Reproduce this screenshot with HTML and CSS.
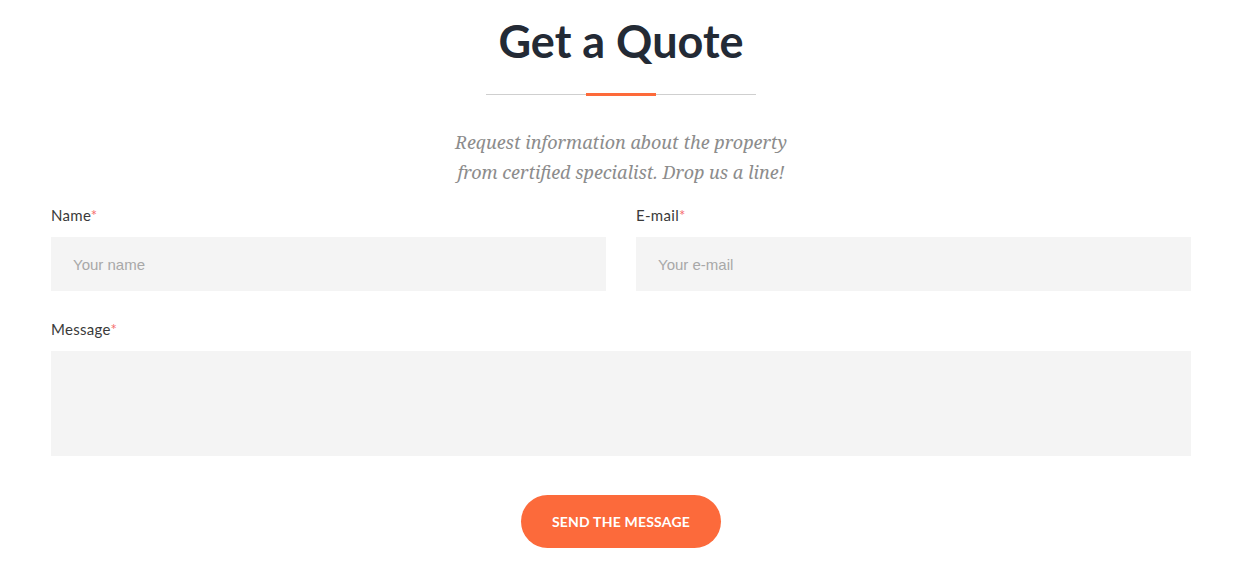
FILE: index.html
```html
<!DOCTYPE html>
<html>
<head>
<meta charset="utf-8">
<link rel="stylesheet" href="styles.css">
</head>
<body>
<section class="quote">
  <h1 class="title">Get a Quote</h1>
  <div class="divider"><span class="divider-accent"></span></div>
  <p class="subtitle">Request information about the property<br>from certified specialist. Drop us a line!</p>
  <form class="form">
    <div class="row">
      <div class="field">
        <label class="label">Name<span class="req">*</span></label>
        <input class="input" type="text" placeholder="Your name">
      </div>
      <div class="field">
        <label class="label">E-mail<span class="req">*</span></label>
        <input class="input" type="text" placeholder="Your e-mail">
      </div>
    </div>
    <div class="field">
      <label class="label">Message<span class="req">*</span></label>
      <textarea class="textarea"></textarea>
    </div>
    <div class="actions">
      <button class="button" type="button">Send the message</button>
    </div>
  </form>
</section>
</body>
</html>
```

FILE: styles.css
```css
html, body {
  margin: 0;
  padding: 0;
  background: #fff;
}
body {
  font-family: Lato, "Liberation Sans", sans-serif;
}
.quote {
  margin: 0 52px 0 51px;
  display: flex;
  flex-direction: column;
  align-items: center;
}
.title {
  margin: 13px 0 0;
  font-size: 45px;
  line-height: 56px;
  font-weight: 700;
  color: #232a35;
  letter-spacing: 0;
}
.divider {
  margin-top: 25px;
  width: 270px;
  height: 1px;
  background: #cfcfcf;
  display: flex;
  justify-content: center;
  align-items: center;
}
.divider-accent {
  width: 70px;
  height: 3px;
  background: #fd6a3a;
}
.subtitle {
  margin: 32px 0 0;
  font-family: "Noto Serif", "DejaVu Serif", serif;
  font-style: italic;
  font-size: 18px;
  line-height: 30px;
  color: #8c8c8c;
  text-align: center;
}
.form {
  width: 100%;
  margin-top: 18px;
  display: flex;
  flex-direction: column;
  gap: 28px;
}
.row {
  display: grid;
  grid-template-columns: 1fr 1fr;
  gap: 30px;
}
.field {
  display: flex;
  flex-direction: column;
}
.label {
  font-size: 15px;
  line-height: 20px;
  color: #3a3a3a;
  letter-spacing: 0.3px;
  margin-bottom: 12px;
}
.req {
  color: #f56e6e;
}
.input, .textarea {
  border: none;
  outline: none;
  background: #f4f4f4;
  margin: 0;
  padding: 0 22px;
  box-sizing: border-box;
  font-family: "Liberation Sans", Arial, sans-serif;
  font-size: 15px;
  color: #333;
}
.input {
  height: 54px;
}
.textarea {
  height: 105px;
  resize: none;
  padding: 16px 22px;
  display: block;
}
.input::placeholder {
  color: #a8a8a8;
}
.actions {
  display: flex;
  justify-content: center;
  margin-top: 11px;
}
.button {
  width: 200px;
  height: 53px;
  border: none;
  border-radius: 27px;
  background: #fc6a3b;
  color: #fff;
  font-family: Lato, "Liberation Sans", sans-serif;
  font-weight: 700;
  font-size: 14px;
  text-transform: uppercase;
  letter-spacing: 0.2px;
  cursor: pointer;
}
```
